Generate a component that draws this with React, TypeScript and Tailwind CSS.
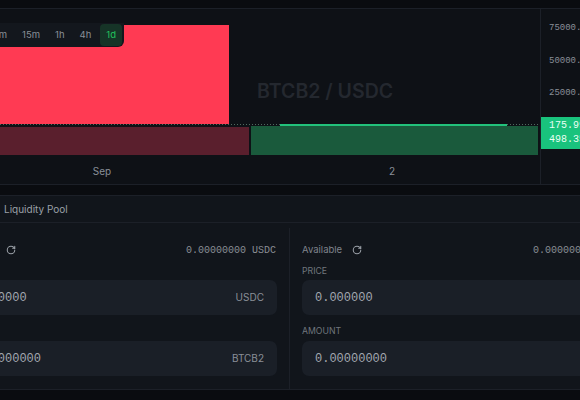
import { RotateCw } from "lucide-react"

const timeframes = ["5m", "15m", "1h", "4h", "1d"]

export default function App() {
  return (
    <div className="h-[400px] w-[580px] overflow-hidden bg-[#0a0c10] font-['Inter',sans-serif]">
      <div className="h-2" />

      {/* chart */}
      <div className="flex h-[177px] border-y border-[#1c2028] bg-[#0e1116]">
        <div className="flex w-[540px] shrink-0 flex-col">
          <div className="relative h-[148px]">
            <svg width="540" height="148" className="absolute inset-0">
              <rect x="0" y="16" width="229" height="99" fill="#ff3a53" />
              <rect x="0" y="118" width="249" height="28" fill="#5a1f2d" />
              <rect x="251" y="117" width="287" height="29" fill="#1a5a3c" />
              <line x1="0" y1="115.5" x2="540" y2="115.5" stroke="#4f6a5e" strokeWidth="1" strokeDasharray="1 2" />
              <rect x="280" y="115" width="227" height="2" fill="#22c27b" />
            </svg>

            <div className="absolute left-[-14px] top-[14px] flex items-center gap-[3px] rounded-br-md bg-[#13171d] py-px pl-px pr-[2px]">
              {timeframes.map((t) => (
                <div
                  key={t}
                  className={
                    t === "1d"
                      ? "flex h-[22px] items-center rounded-[4px] bg-[#163427] px-[6px] text-[9.5px] text-[#22c55e]"
                      : "flex h-[22px] items-center px-[6px] text-[9.5px] text-[#8a8f98]"
                  }
                >
                  {t}
                </div>
              ))}
            </div>

            <div className="absolute left-[257px] top-[73px] text-[19.5px] font-semibold leading-none text-[#24282f]">
              BTCB2 / USDC
            </div>
          </div>
          <div className="relative h-[27px] text-[10px] text-[#8a8f98]">
            <span className="absolute left-[102px] top-[7px] -translate-x-1/2">Sep</span>
            <span className="absolute left-[392px] top-[7px] -translate-x-1/2">2</span>
          </div>
        </div>

        <div className="relative w-[80px] shrink-0 border-l border-[#1c2028] font-['Liberation_Mono',monospace] text-[9px] text-[#8a8f98]">
          <span className="absolute left-[8px] top-[13px]">75000.00</span>
          <span className="absolute left-[8px] top-[46px]">50000.00</span>
          <span className="absolute left-[8px] top-[78px]">25000.00</span>
          <div className="absolute left-0 top-[108px] flex h-[32px] w-full flex-col justify-center gap-[4px] bg-[#19c37d] pl-[8px] text-[10px] text-[#eafff3]">
            <span className="leading-none">175.99</span>
            <span className="leading-none">498.35</span>
          </div>
        </div>
      </div>

      <div className="h-[10px]" />

      {/* order panel */}
      <div className="border-y border-[#1c2028] bg-[#11151b]">
        <div className="flex h-[27px] items-center border-b border-[#1c2028] pl-[4px] text-[10px] text-[#9ba0a8]">
          Liquidity Pool
        </div>
        <div className="ml-[-56px] flex w-[720px]">
          <Column value="0.00000000 USDC" price="0.000000" amount="0.00000000" priceUnit="USDC" amountUnit="BTCB2" />
          <div className="mt-[5px] w-px bg-[#1c2028]" />
          <Column wide value="0.00000000 BTCB2" price="0.000000" amount="0.00000000" priceUnit="USDC" amountUnit="BTCB2" />
        </div>
      </div>
    </div>
  )
}

function Column({
  value,
  price,
  amount,
  priceUnit,
  amountUnit,
  wide,
}: {
  value: string
  price: string
  amount: string
  priceUnit: string
  amountUnit: string
  wide?: boolean
}) {
  return (
    <div className={wide ? "w-[352px] shrink-0 px-3 pb-[13px] pt-5" : "w-[345px] shrink-0 px-3 pb-[13px] pt-5"}>
      <div className="flex h-[14px] items-center justify-between">
        <div className="flex items-center gap-[10px] text-[9.5px] text-[#7f848c]">
          Available
          <RotateCw size={10} strokeWidth={2.5} className="text-[#9ba0a8]" />
        </div>
        <span className="pr-px font-['Liberation_Mono',monospace] text-[10px] text-[#8a8e95]">{value}</span>
      </div>
      <div className="mt-[8px] mb-[3px] h-[12px] text-[8.7px] leading-[12px] text-[#70757d]">PRICE</div>
      <Field num={price} unit={priceUnit} />
      <div className="mt-[10px] mb-[4px] h-[12px] text-[8.7px] leading-[12px] text-[#70757d]">AMOUNT</div>
      <Field num={amount} unit={amountUnit} />
    </div>
  )
}

function Field({ num, unit }: { num: string; unit: string }) {
  return (
    <div className="flex h-[35px] items-center justify-between rounded-[7px] bg-[#1a1f27] px-[13px]">
      <span className="font-['Liberation_Mono',monospace] text-[12px] text-[#a2a7af]">{num}</span>
      <span className="text-[10px] text-[#8a8f98]">{unit}</span>
    </div>
  )
}
